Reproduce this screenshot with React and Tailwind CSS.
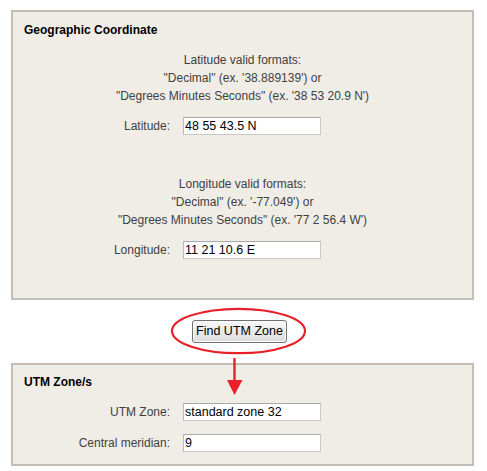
import React from "react";

const labelFont = { fontFamily: '"Liberation Sans", Arial, sans-serif' };

function Field({ label, value }) {
  return (
    <div className="flex items-center h-[18px]">
      <div className="w-[157px] text-right text-[12px] text-[#404040] leading-[18px]">{label}</div>
      <div className="ml-[13px] w-[138px] h-[18px] bg-white border border-[#c8c8c8] border-t-[#a8a8a8] border-l-[#b8b8b8] flex items-center pl-px text-[12.5px] text-black leading-[16px]">
        {value}
      </div>
    </div>
  );
}

export default function App() {
  return (
    <div className="w-[487px] h-[471px] bg-white pt-[10px]" style={labelFont}>
      <div className="ml-[11px] w-[463px] h-[290px] bg-[#f0ede7] border-2 border-[#c3beb5] pt-[9px]">
        <div className="pl-[11px] text-[12px] font-bold text-black leading-[18px]">Geographic Coordinate</div>
        <div className="mt-[12px] text-center text-[12px] text-[#404040] leading-[18px]">
          <div>Latitude valid formats:</div>
          <div>"Decimal" (ex. '38.889139') or</div>
          <div>"Degrees Minutes Seconds" (ex. '38 53 20.9 N')</div>
        </div>
        <div className="mt-[12px]">
          <Field label="Latitude:" value="48 55 43.5 N" />
        </div>
        <div className="mt-[40px] text-center text-[12px] text-[#404040] leading-[18px]">
          <div>Longitude valid formats:</div>
          <div>"Decimal" (ex. '-77.049') or</div>
          <div>"Degrees Minutes Seconds" (ex. '77 2 56.4 W')</div>
        </div>
        <div className="mt-[12px]">
          <Field label="Longitude:" value="11 21 10.6 E" />
        </div>
      </div>

      <div className="relative ml-[11px] w-[463px] py-[20px]">
        <div className="flex pl-[181px]">
          <button className="w-[95px] h-[23px] rounded-[3px] border border-[#707070] bg-gradient-to-b from-[#f7f7f7] to-[#dcdcdc] text-[12.5px] text-black leading-[21px] shadow-[inset_0_0_0_1px_#fcfcfc]">
            Find UTM Zone
          </button>
        </div>
        <svg className="absolute left-[159px] top-[7px] z-10" width="137" height="48" viewBox="0 0 137 48">
          <ellipse cx="68.5" cy="24" rx="66.5" ry="22.2" fill="none" stroke="#e8202a" strokeWidth="2.2" />
        </svg>
        <svg className="absolute left-[215px] top-[57px] z-10" width="18" height="40" viewBox="0 0 18 40">
          <line x1="8.5" y1="1" x2="8.5" y2="24" stroke="#e8202a" strokeWidth="2.4" />
          <polygon points="1,23 16.5,23 8.5,38" fill="#e8202a" />
        </svg>
      </div>

      <div className="ml-[11px] w-[463px] h-[103px] bg-[#f0ede7] border-2 border-[#c3beb5] pt-[8px]">
        <div className="pl-[11px] text-[12px] font-bold text-black leading-[18px]">UTM Zone/s</div>
        <div className="mt-[12px]">
          <Field label="UTM Zone:" value="standard zone 32" />
        </div>
        <div className="mt-[13px]">
          <Field label="Central meridian:" value="9" />
        </div>
      </div>
    </div>
  );
}
